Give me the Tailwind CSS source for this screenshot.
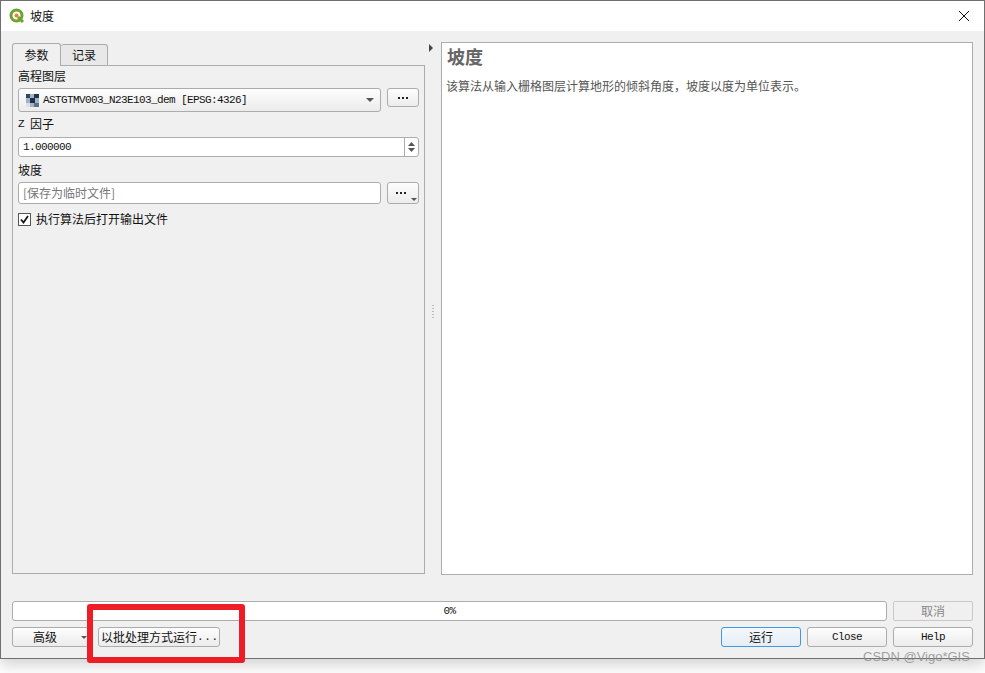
<!DOCTYPE html>
<html lang="zh">
<head>
<meta charset="utf-8">
<script src="https://cdn.jsdelivr.net/npm/@tailwindcss/browser@4"></script>
</head>
<body class="relative w-[985px] h-[673px] overflow-hidden bg-white font-['Noto_Sans_CJK_SC','Liberation_Sans',sans-serif] text-[12px] text-[#111]">
<div class="w-[985px] h-[659px] border border-[#707070] bg-[#f0f0f0] flex flex-col shadow-[0_6px_14px_rgba(0,0,0,0.18)]">
  <div class="h-[30px] shrink-0 bg-white flex items-center pl-[8px] pr-[14px]">
    <svg width="16" height="16" viewBox="0 0 16 16" class="mr-[5px]"><circle cx="7.500" cy="7.500" r="5.500" fill="#fff" stroke="#6ea32e" stroke-width="3"/><circle cx="7.500" cy="7.500" r="2" fill="#ee7d32"/><path d="M9 9l5 5" stroke="#6ea32e" stroke-width="3"/></svg>
    <span class="leading-none">坡度</span>
    <svg width="12" height="12" viewBox="0 0 12 12" class="ml-auto"><path d="M1 1l10 10M11 1L1 11" stroke="#111" stroke-width="1"/></svg>
  </div>
  <div class="flex-1 flex flex-col px-[11px] pt-[11px]">
    <div class="flex h-[533px]">
      <div class="w-[413px] flex flex-col">
        <div class="flex h-[23px] items-end shrink-0">
          <div class="w-[49px] h-[23px] bg-[#f0f0f0] border border-b-0 border-[#acacac] rounded-t-[3px] flex items-center justify-center z-10 -mb-px">参数</div>
          <div class="w-[47px] h-[21px] bg-[#e8e8e8] border border-b-0 border-l-0 border-[#acacac] rounded-t-[3px] flex items-center justify-center">记录</div>
        </div>
        <div class="h-[509px] border border-[#acacac] bg-[#f0f0f0] px-[5px] flex flex-col">
          <div class="h-[20px] text-[12px] flex items-center">高程图层</div>
          <div class="flex items-start h-[24px] mt-[2px]">
            <div class="w-[363px] h-[24px] border border-[#acacac] rounded-[3px] bg-gradient-to-b from-[#fdfdfd] to-[#ececec] flex items-center pl-[7px] pr-[6px]">
              <svg width="13" height="13" viewBox="0 0 13 13" class="mr-[4px]"><rect width="13" height="13" fill="#9fb4c8"/><rect x="0" y="0" width="4" height="4" fill="#33485e"/><rect x="8" y="0" width="5" height="4" fill="#223548"/><rect x="4" y="4" width="5" height="5" fill="#1f3043"/><rect x="0" y="9" width="4" height="4" fill="#d9e2ea"/><rect x="8" y="9" width="5" height="4" fill="#5c7288"/></svg>
              <span class="font-['Liberation_Mono',monospace] text-[11px] tracking-[-0.6px]">ASTGTMV003_N23E103_dem [EPSG:4326]</span>
              <svg width="8" height="4" viewBox="0 0 8 4" class="ml-auto"><path d="M0 0h8L4 4z" fill="#555"/></svg>
            </div>
            <div class="ml-[6px] w-[32px] h-[19px] border border-[#acacac] rounded-[3px] bg-gradient-to-b from-[#fdfdfd] to-[#ececec] flex items-center justify-center gap-[2px]">
              <i class="w-[2px] h-[2px] bg-[#222]"></i><i class="w-[2px] h-[2px] bg-[#222]"></i><i class="w-[2px] h-[2px] bg-[#222]"></i>
            </div>
          </div>
          <div class="h-[20px] mt-[2px] flex items-center"><span class="font-['Liberation_Mono',monospace] text-[11px] tracking-[-0.6px] mr-[6px]">Z</span>因子</div>
          <div class="mt-[3px] w-[401px] h-[20px] border border-[#acacac] rounded-[3px] bg-white flex items-center">
            <span class="pl-[4px] font-['Liberation_Mono',monospace] text-[11px] tracking-[-0.6px]">1.000000</span>
            <div class="ml-auto w-[14px] h-full border-l border-[#acacac] flex flex-col items-center justify-center gap-[2px]">
              <svg width="7" height="4" viewBox="0 0 7 4"><path d="M3.500 0L7 4H0z" fill="#555"/></svg>
              <svg width="7" height="4" viewBox="0 0 7 4"><path d="M0 0h7L3.500 4z" fill="#555"/></svg>
            </div>
          </div>
          <div class="h-[20px] mt-[3px] flex items-center">坡度</div>
          <div class="flex items-start mt-[2px]">
            <div class="w-[363px] h-[22px] border border-[#acacac] rounded-[3px] bg-white flex items-center pl-[4px] text-[#777]">[保存为临时文件]</div>
            <div class="relative ml-[6px] w-[32px] h-[22px] border border-[#acacac] rounded-[3px] bg-gradient-to-b from-[#fdfdfd] to-[#ececec] flex items-center justify-center gap-[2px] pr-[4px]">
              <i class="w-[2px] h-[2px] bg-[#222]"></i><i class="w-[2px] h-[2px] bg-[#222]"></i><i class="w-[2px] h-[2px] bg-[#222]"></i>
              <svg width="6" height="3" viewBox="0 0 6 3" class="absolute right-[1px] bottom-[2px]"><path d="M0 0h6L3 3z" fill="#555"/></svg>
            </div>
          </div>
          <div class="flex items-center mt-[8px] h-[14px]">
            <div class="w-[13px] h-[13px] border border-[#555] bg-white flex items-center justify-center mr-[5px]">
              <svg width="11" height="11" viewBox="0 0 11 11"><path d="M2 5.500l2.500 3L9 2" fill="none" stroke="#111" stroke-width="1.700"/></svg>
            </div>
            <span>执行算法后打开输出文件</span>
          </div>
        </div>
      </div>
      <div class="w-[16px] relative">
        <svg width="4" height="8" viewBox="0 0 4 8" class="absolute left-[4px] top-[2px]"><path d="M0 0l4 4L0 8z" fill="#444"/></svg>
        <div class="absolute left-[7px] top-[263px] flex flex-col gap-[2px]">
          <i class="block w-[2px] h-[1px] bg-[#bbb]"></i><i class="block w-[2px] h-[1px] bg-[#bbb]"></i><i class="block w-[2px] h-[1px] bg-[#bbb]"></i><i class="block w-[2px] h-[1px] bg-[#bbb]"></i><i class="block w-[2px] h-[1px] bg-[#bbb]"></i>
        </div>
      </div>
      <div class="w-[532px] h-[533px] border border-[#acacac] bg-white pl-[4px] text-[#555]">
        <div class="h-[26px] ml-[1px] text-[18px] leading-[26px] font-bold text-[#666]">坡度</div>
        <p class="mt-[7px] leading-[20px]">该算法从输入栅格图层计算地形的倾斜角度，坡度以度为单位表示。</p>
      </div>
    </div>
    <div class="flex mt-[26px] h-[20px]">
      <div class="w-[875px] border border-[#acacac] rounded-[3px] bg-white flex items-center justify-center font-['Liberation_Mono',monospace] text-[11px] tracking-[-0.6px]">0%</div>
      <div class="ml-[6px] w-[80px] border border-[#c8c8c8] rounded-[2px] bg-[#f0f0f0] flex items-center justify-center text-[#888]">取消</div>
    </div>
    <div class="flex mt-[6px] h-[20px]">
      <div class="relative w-[80px] border border-[#acacac] rounded-[3px] bg-gradient-to-b from-[#fdfdfd] to-[#ececec] flex items-center pl-[20px]">高级
        <svg width="6" height="3" viewBox="0 0 6 3" class="absolute right-[4px] top-[8px]"><path d="M0 0h6L3 3z" fill="#555"/></svg>
      </div>
      <div class="ml-[6px] w-[122px] border border-[#acacac] rounded-[3px] bg-gradient-to-b from-[#fdfdfd] to-[#ececec] flex items-center pl-[2px]">以批处理方式运行<span class="font-['Liberation_Mono',monospace] text-[11px] tracking-[0.6px]">...</span></div>
      <div class="ml-auto w-[80px] border border-[#3f9ae6] rounded-[3px] bg-gradient-to-b from-[#f4f8fc] to-[#e6edf5] flex items-center justify-center">运行</div>
      <div class="ml-[6px] w-[80px] border border-[#acacac] rounded-[3px] bg-gradient-to-b from-[#fdfdfd] to-[#ececec] flex items-center justify-center font-['Liberation_Mono',monospace] text-[11px] tracking-[-0.6px] font-medium">Close</div>
      <div class="ml-[6px] w-[80px] border border-[#acacac] rounded-[3px] bg-gradient-to-b from-[#fdfdfd] to-[#ececec] flex items-center justify-center font-['Liberation_Mono',monospace] text-[11px] tracking-[-0.6px] font-medium">Help</div>
    </div>
  </div>
</div>
<div class="absolute left-[87px] top-[604px] w-[158px] h-[59px] border-[6px] border-[#ee1c25] rounded-[3px]"></div>
<div class="absolute left-[863px] top-[648px] font-['Liberation_Sans',sans-serif] text-[13px] leading-[17px] text-[#8a8a8a]/80">CSDN @Vigo*GIS</div>
</body>
</html>
